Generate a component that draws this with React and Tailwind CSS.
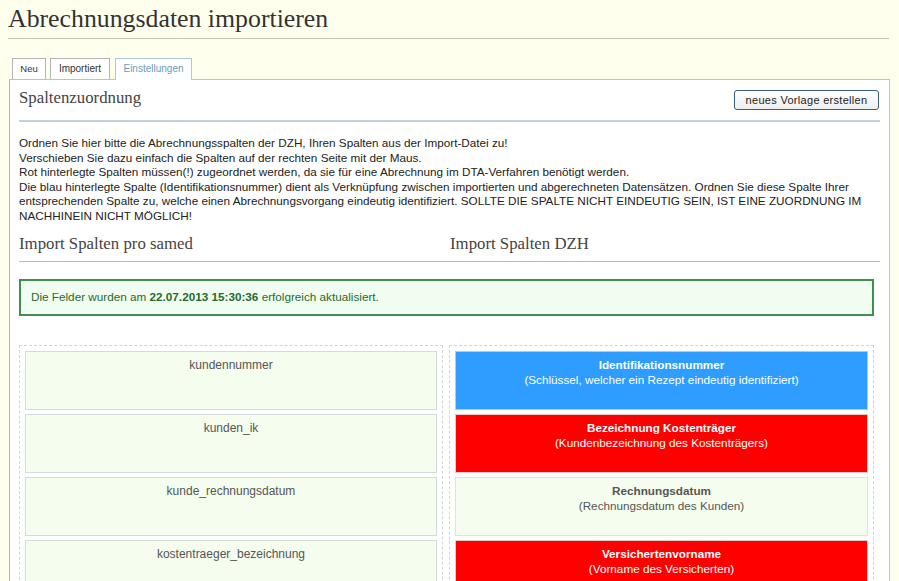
const leftRows = ['kundennummer', 'kunden_ik', 'kunde_rechnungsdatum', 'kostentraeger_bezeichnung'];

const rightRows = [
  { title: 'Identifikationsnummer', sub: '(Schlüssel, welcher ein Rezept eindeutig identifiziert)', cls: 'bg-[#2e9dff] border-[#a9cdf0] text-white' },
  { title: 'Bezeichnung Kostenträger', sub: '(Kundenbezeichnung des Kostenträgers)', cls: 'bg-[#ff0000] border-[#e8c9c9] text-white' },
  { title: 'Rechnungsdatum', sub: '(Rechnungsdatum des Kunden)', cls: 'bg-[#f5fdee] border-[#dfe3dc] text-[#555555]' },
  { title: 'Versichertenvorname', sub: '(Vorname des Versicherten)', cls: 'bg-[#ff0000] border-[#e8c9c9] text-white' },
];

const serif = "font-['Liberation_Serif',serif]";

export default function App() {
  return (
    <div className="h-[581px] overflow-hidden bg-[#ffffee] pl-2 pr-[9px] font-['Liberation_Sans',sans-serif] text-[11.72px] leading-[14.5px] text-[#222222]">
      {/* Title */}
      <h1 className={`${serif} mr-px h-[39px] border-b border-[#c4c4b4] pt-[5px] text-[25.8px] leading-[28px] text-[#333333]`}>
        Abrechnungsdaten importieren
      </h1>

      {/* Tabs */}
      <div className="mt-[19px] ml-1 flex h-[21px] items-end gap-1 text-[10px]">
        <div className="flex h-[21px] w-[34px] items-center justify-center border border-b-0 border-[#b5b5b5] bg-white text-[9.5px] text-[#333333]">Neu</div>
        <div className="flex h-[21px] w-[60px] items-center justify-center border border-b-0 border-[#b5b5b5] bg-white text-[#333333]">Importiert</div>
        <div className="relative top-px z-10 ml-px flex h-[22px] w-[77px] items-center justify-center border border-b-0 border-[#a9c8d8] bg-white text-[#6a9cbc]">Einstellungen</div>
      </div>

      {/* Panel */}
      <div className="ml-px h-[600px] border border-[#a9c8d8] border-l-[#a3bcd8] bg-white px-[9px]">
        <div className="flex h-[42px] items-center justify-between border-b-2 border-[#bcd3df]">
          <h2 className={`${serif} mb-[3px] text-[16.8px] text-[#444444]`}>Spaltenzuordnung</h2>
          <button className="mr-px h-5 w-[145px] rounded-[3px] border border-[#3a5f7c] bg-gradient-to-b from-white to-[#eeeeee] text-[11px] tracking-[0.3px] text-[#222222]">
            neues Vorlage erstellen
          </button>
        </div>

        <p className="mt-[14px]">
          Ordnen Sie hier bitte die Abrechnungsspalten der DZH, Ihren Spalten aus der Import-Datei zu!<br />
          Verschieben Sie dazu einfach die Spalten auf der rechten Seite mit der Maus.<br />
          Rot hinterlegte Spalten müssen(!) zugeordnet werden, da sie für eine Abrechnung im DTA-Verfahren benötigt werden.<br />
          Die blau hinterlegte Spalte (Identifikationsnummer) dient als Verknüpfung zwischen importierten und abgerechneten Datensätzen. Ordnen Sie diese Spalte Ihrer entsprechenden Spalte zu, welche einen Abrechnungsvorgang eindeutig identifiziert. SOLLTE DIE SPALTE NICHT EINDEUTIG SEIN, IST EINE ZUORDNUNG IM NACHHINEIN NICHT MÖGLICH!
        </p>

        <div className={`${serif} mt-[12px] grid h-[27px] grid-cols-[431px_1fr] border-b border-[#a9bccb] text-[16.8px] leading-[18px] text-[#444444]`}>
          <span>Import Spalten pro samed</span>
          <span>Import Spalten DZH</span>
        </div>

        {/* Success message */}
        <div className="mt-[17px] flex h-[37px] w-[855px] items-center border-2 border-[#3f8f4f] bg-[#f1fdf1] px-[10px] text-[#1f6b2f]">
          <span>Die Felder wurden am <b>22.07.2013 15:30:36</b> erfolgreich aktualisiert.</span>
        </div>

        {/* Columns */}
        <div className="mt-[29px] grid grid-cols-[424px_425px] gap-[6px]">
          <div className="flex flex-col gap-1 border border-dashed border-[#d4d4d4] p-[5px]">
            {leftRows.map((name) => (
              <div key={name} className="h-[59px] border border-[#d5dcd8] bg-[#f5fdee] pt-[6px] text-center text-[12px] text-[#555555]">
                {name}
              </div>
            ))}
          </div>
          <div className="flex flex-col gap-1 border border-dashed border-[#d4d4d4] p-[5px]">
            {rightRows.map((row) => (
              <div key={row.title} className={`h-[59px] border pt-[6px] text-center ${row.cls}`}>
                <div className="font-bold">{row.title}</div>
                <div>{row.sub}</div>
              </div>
            ))}
          </div>
        </div>
      </div>
    </div>
  );
}
